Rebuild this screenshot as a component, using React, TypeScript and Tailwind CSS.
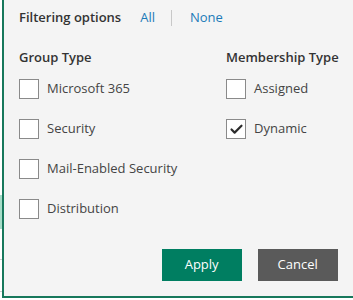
import { Check } from "lucide-react";

type Option = { label: string; checked?: boolean };

const groupTypes: Option[] = [
  { label: "Microsoft 365" },
  { label: "Security" },
  { label: "Mail-Enabled Security" },
  { label: "Distribution" },
];

const membershipTypes: Option[] = [
  { label: "Assigned" },
  { label: "Dynamic", checked: true },
];

function CheckRow({ label, checked }: Option) {
  return (
    <label className="flex h-[40px] items-center gap-[8px]">
      <span className="flex h-[20px] w-[20px] items-center justify-center border border-[#8a8a8a] bg-white">
        {checked && <Check className="h-[15px] w-[15px] text-[#2b2b2b]" strokeWidth={3.4} />}
      </span>
      <span className="whitespace-nowrap text-[13px] text-[#444]">{label}</span>
    </label>
  );
}

export default function App() {
  return (
    <div
      className="relative flex h-[300px] w-[353px] bg-white"
      style={{ fontFamily: '"Open Sans", "Noto Sans", sans-serif' }}
    >
      {/* bits of the page behind the panel */}
      <div className="absolute left-0 top-[195px] h-[34px] w-[2px] bg-[#a6dcc8]" />
      <div className="absolute left-0 top-[259px] h-px w-[2px] bg-[#cfcfcf]" />
      <div className="absolute left-0 top-[291px] h-px w-[2px] bg-[#cfcfcf]" />

      <div className="ml-[2px] flex h-[298px] flex-1 flex-col border-b-2 border-l-2 border-[#17785c] bg-[#f4f4f4] pl-[15px] pr-[15px]">
        <div className="flex h-[35px] items-center pt-[1px]">
          <span className="text-[13px] font-semibold text-[#333]">Filtering options</span>
          <span className="ml-[19px] text-[13px] text-[#1b7ab8]">All</span>
          <span className="ml-[16px] h-[16px] w-px bg-[#c8c8c8]" />
          <span className="ml-[18px] text-[13px] text-[#1b7ab8]">None</span>
        </div>

        <div className="mt-[11px] grid grid-cols-[207px_1fr]">
          <div>
            <div className="flex h-[23px] items-center whitespace-nowrap text-[13px] font-semibold text-[#333]">Group Type</div>
            {groupTypes.map((o) => (
              <CheckRow key={o.label} {...o} />
            ))}
          </div>
          <div>
            <div className="flex h-[23px] items-center whitespace-nowrap text-[13px] font-semibold text-[#333]">Membership Type</div>
            {membershipTypes.map((o) => (
              <CheckRow key={o.label} {...o} />
            ))}
          </div>
        </div>

        <div className="mt-auto mb-[15px] mr-[1px] flex justify-end gap-[16px]">
          <button className="h-[32px] w-[80px] bg-[#007e61] text-[13px] text-white">Apply</button>
          <button className="h-[32px] w-[80px] bg-[#5a5a5a] text-[13px] text-white">Cancel</button>
        </div>
      </div>
    </div>
  );
}
